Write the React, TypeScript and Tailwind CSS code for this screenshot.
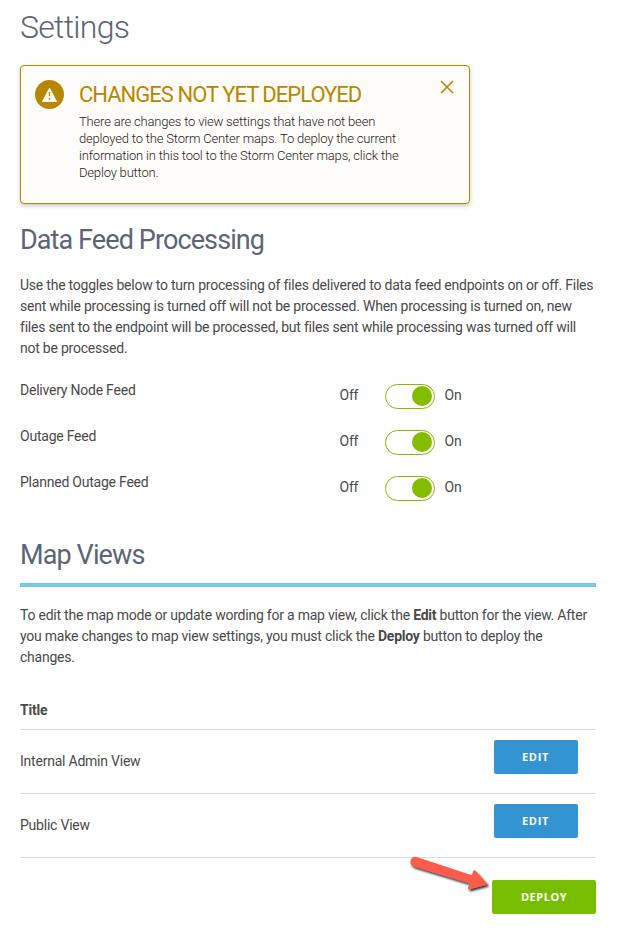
import React from "react";

const feeds = ["Delivery Node Feed", "Outage Feed", "Planned Outage Feed"];
const views = ["Internal Admin View", "Public View"];

function Line({ children }: { children: React.ReactNode }) {
  return <span className="block whitespace-nowrap">{children}</span>;
}

function Banner() {
  return (
    <section className="mt-[18px] flex h-[139px] w-[450px] rounded-[4px] border border-[#b88700] bg-[#fffdf9] shadow-[0_2px_4px_rgba(0,0,0,0.22)]">
      <div className="ml-[14px] mt-[14px] flex size-[29px] shrink-0 items-center justify-center rounded-full bg-[#b88700]">
        <svg className="size-[29px]" viewBox="0 0 29 29">
          <path d="M14.5 8.2 L21.6 21.5 H7.4 Z" fill="#fff" stroke="#fff" strokeWidth="0.8" strokeLinejoin="round" />
          <path d="M14.5 12v4.2M14.5 18v1.8" stroke="#b88700" strokeWidth="1.4" />
        </svg>
      </div>
      <div className="ml-[15px] flex-1 pt-[14px]">
        <h2 className="h-[33px] whitespace-nowrap pt-px text-[22px] leading-[28px] tracking-[-0.98px] text-[#b88700]">
          CHANGES NOT YET DEPLOYED
        </h2>
        <p className="text-[13px] font-light leading-[17px] tracking-[-0.185px] text-[#222]">
          <Line>There are changes to view settings that have not been</Line>
          <Line>deployed to the Storm Center maps. To deploy the current</Line>
          <Line>information in this tool to the Storm Center maps, click the</Line>
          <Line>Deploy button.</Line>
        </p>
      </div>
      <button className="mr-[15px] mt-[14px] size-[14px]" aria-label="Close">
        <svg className="size-[14px]" viewBox="0 0 14 14">
          <path d="M1 1l12 12M13 1L1 13" stroke="#b88700" strokeWidth="1.6" />
        </svg>
      </button>
    </section>
  );
}

function FeedRow({ name }: { name: string }) {
  return (
    <div className="flex h-[46px] items-start leading-[20px]">
      <span className="w-[319.5px]">{name}</span>
      <span className="mt-[5px] w-[45.5px] tracking-[-0.2px]">Off</span>
      <span className="mt-[4px] flex h-[25px] w-[50px] justify-end rounded-full border border-[#84bd00] pr-[2px] pt-px">
        <span className="size-[20px] rounded-full bg-[#84bd00]" />
      </span>
      <span className="ml-[9.5px] mt-[5px] tracking-[-0.2px]">On</span>
    </div>
  );
}

export default function App() {
  return (
    <main className="h-[932px] w-[624px] overflow-hidden bg-white pl-[20px] pr-[28px] pt-[7px] font-[Roboto,sans-serif] text-[14px] tracking-[-0.225px] text-[#4a4a4a]">
      <h1 className="h-[40px] text-[32px] font-light leading-[40px] tracking-[-0.7px] text-[#5b6577]">Settings</h1>
      <Banner />
      <h2 className="mt-[18px] h-[36px] text-[27px] leading-[36px] tracking-[-0.9px] text-[#5b6577]">Data Feed Processing</h2>
      <p className="mt-[17px] leading-[21px]">
        <Line>Use the toggles below to turn processing of files delivered to data feed endpoints on or off. Files</Line>
        <Line>sent while processing is turned off will not be processed. When processing is turned on, new</Line>
        <Line>files sent to the endpoint will be processed, but files sent while processing was turned off will</Line>
        <Line>not be processed.</Line>
      </p>
      <div className="mt-[21px]">
        {feeds.map((name) => (
          <FeedRow key={name} name={name} />
        ))}
      </div>
      <h2 className="mt-[19px] h-[46px] text-[27px] leading-[36px] tracking-[-0.88px] text-[#5b6577]">Map Views</h2>
      <div className="h-[4px] bg-[#78c9e8]" />
      <p className="mt-[18px] leading-[21px]">
        <Line>
          To edit the map mode or update wording for a map view, click the <b>Edit</b> button for the view. After
        </Line>
        <Line>
          you make changes to map view settings, you must click the <b>Deploy</b> button to deploy the
        </Line>
        <Line>changes.</Line>
      </p>
      <div className="mt-[32px] h-[30px] border-b border-[#ddd] font-bold leading-[20px]">Title</div>
      {views.map((name) => (
        <div key={name} className="flex h-[64px] items-center justify-between border-b border-[#ddd] pr-[18px]">
          <span>{name}</span>
          <button className="mb-[9px] h-[34px] w-[84px] rounded-[2px] bg-[#3294d1] pr-px font-['Open_Sans',sans-serif] text-[11px] font-bold tracking-[0.65px] text-white">
            EDIT
          </button>
        </div>
      ))}
      <div className="relative flex justify-end pt-[22px]">
        <svg className="absolute left-[382px] top-[-8px]" width="100" height="50" viewBox="0 0 100 50">
          <defs>
            <filter id="arrowShadow" x="-20%" y="-20%" width="140%" height="150%">
              <feDropShadow dx="1.5" dy="2" stdDeviation="1.3" floodColor="#000" floodOpacity="0.8" />
            </filter>
          </defs>
          <path
            d="M14.5 7 L69.8 25.2 L71.5 20.4 Q72 19.4 73.2 20.4 L85 33.5 Q85.5 34.6 84 35 L67.5 39.3 Q65.2 39.8 66 37.5 L67.8 33.6 L11.5 16.5 A5 5 0 0 1 14.5 7 Z"
            fill="#fd5b4b"
            filter="url(#arrowShadow)"
          />
        </svg>
        <button className="h-[34px] w-[104px] rounded-[2px] bg-[#78be00] font-['Open_Sans',sans-serif] text-[11px] font-bold tracking-[0.5px] text-white">
          DEPLOY
        </button>
      </div>
    </main>
  );
}
